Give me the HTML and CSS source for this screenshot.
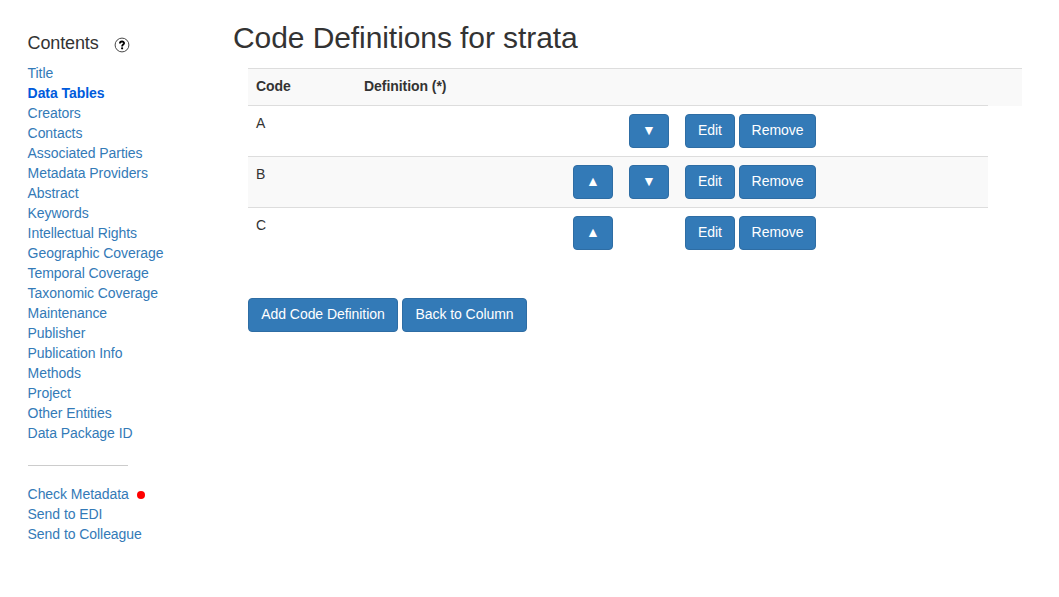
FILE: index.html
```html
<!DOCTYPE html>
<html lang="en">
<head>
<meta charset="utf-8">
<title>Code Definitions for strata</title>
<link rel="stylesheet" href="styles.css">
</head>
<body>
<div class="layout">
<nav class="sidebar">
<div class="contents"><span>Contents</span><svg class="help" viewBox="0 0 16 16" width="16" height="16"><circle cx="8" cy="8" r="6.9" fill="none" stroke="#333" stroke-width="0.9"/><path d="M5.9 6.5C5.9 3.9 10.2 3.9 10.1 6.2C10 7.6 8.1 7.6 8.1 9.4" fill="none" stroke="#000" stroke-width="1.8"/><circle cx="8.1" cy="11.3" r="1.1" fill="#000"/></svg></div>
<a>Title</a>
<a class="current">Data Tables</a>
<a>Creators</a>
<a>Contacts</a>
<a>Associated Parties</a>
<a>Metadata Providers</a>
<a>Abstract</a>
<a>Keywords</a>
<a>Intellectual Rights</a>
<a>Geographic Coverage</a>
<a>Temporal Coverage</a>
<a>Taxonomic Coverage</a>
<a>Maintenance</a>
<a>Publisher</a>
<a>Publication Info</a>
<a>Methods</a>
<a>Project</a>
<a>Other Entities</a>
<a>Data Package ID</a>
<div class="divider"></div>
<a>Check Metadata<span class="dot"></span></a>
<a>Send to EDI</a>
<a>Send to Colleague</a>
</nav>
<main class="main">
<h2>Code Definitions for strata</h2>
<div class="content">
<div class="row head"><b>Code</b><b>Definition (*)</b></div>
<div class="row"><span>A</span><span></span><span></span><button class="btn arrow">▼</button><span class="actions"><button class="btn edit">Edit</button><button class="btn remove">Remove</button></span></div>
<div class="row striped"><span>B</span><span></span><button class="btn arrow">▲</button><button class="btn arrow">▼</button><span class="actions"><button class="btn edit">Edit</button><button class="btn remove">Remove</button></span></div>
<div class="row"><span>C</span><span></span><button class="btn arrow">▲</button><span></span><span class="actions"><button class="btn edit">Edit</button><button class="btn remove">Remove</button></span></div>
<div class="actions footer"><button class="btn add">Add Code Definition</button><button class="btn back">Back to Column</button></div>
</div>
</main>
</div>
</body>
</html>
```
FILE: styles.css
```css
* { box-sizing: border-box; }
body { margin: 0; background: #fff; color: #333; font: 14px/20px "Liberation Sans", Arial, sans-serif; letter-spacing: -0.06px; }
.layout { display: flex; }
.sidebar { width: 233px; padding: 33px 0 0 27.6px; }
.sidebar a { display: block; color: #337ab7; }
.sidebar .current { color: #005bdc; font-weight: bold; }
.contents { display: flex; height: 30px; font-size: 18px; letter-spacing: -0.13px; }
.contents span { width: 71.4px; }
.help { margin: 4px 0 0 15px; }
.divider { width: 100px; height: 1px; background: #ccc; margin: 22px 0 18px; }
.dot { display: inline-block; width: 8px; height: 8px; margin-left: 8px; border-radius: 50%; background: red; }
.main { width: 789px; padding-top: 21px; }
h2 { margin: 0 0 14px; font-size: 30px; line-height: 33px; font-weight: 500; letter-spacing: -0.08px; }
.content { padding-left: 15px; }
.row { display: grid; grid-template-columns: 108px 209px 56px 56px 1fr; width: 740px; height: 51px; padding: 7px 8px; border-top: 1px solid #ddd; align-items: start; }
.row > .btn, .row > .actions { margin-top: 1px; }
.head { width: 774px; height: 38px; margin-bottom: -1px; background: #f9f9f9; }
.striped { background: #f9f9f9; }
.actions { display: flex; gap: 4px; }
.footer { margin-top: 40px; }
.btn { height: 34px; padding: 5px 0 7px; border: 1px solid #2e6da4; border-radius: 4px; background: #337ab7; color: #fff; font: inherit; letter-spacing: inherit; text-align: center; white-space: nowrap; }
.arrow { width: 40px; }
.edit { width: 50px; }
.remove { width: 77px; }
.add { width: 150px; }
.back { width: 125px; }
```
